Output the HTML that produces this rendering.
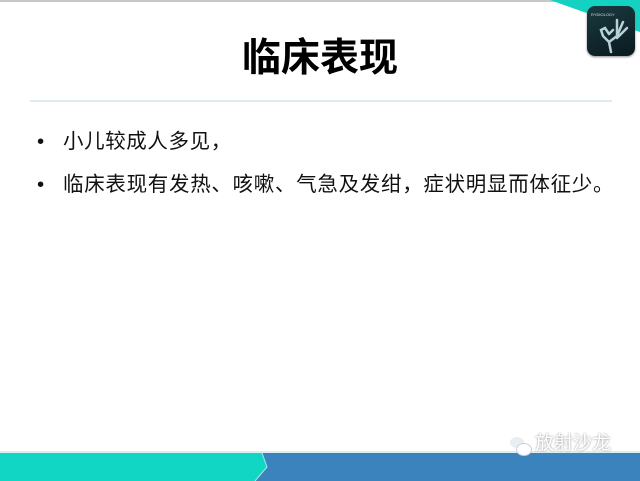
<!DOCTYPE html>
<html><head><meta charset="utf-8"><style>
body{margin:0;width:640px;height:481px;position:relative;overflow:hidden;background:#fff;font-family:"Liberation Sans","Noto Sans CJK SC",sans-serif;}
.abs{position:absolute}
</style></head><body>
<div class="abs" style="left:0;top:0;width:640px;height:2px;background:#c8c8c8"></div>
<svg class="abs" style="left:0;top:0" width="640" height="481">
<polygon points="550,0 640,0 640,32" fill="#14d2c2"/>
<rect x="0" y="451" width="640" height="2" fill="#dceff0"/>
<polygon points="0,453 262,453 267,467 255,481 0,481" fill="#12d6c4"/>
<polygon points="262,453 640,453 640,481 255,481 267,467" fill="#3b83bd"/>
<polyline points="262,453 267,467 255,481" fill="none" stroke="#a8e8e4" stroke-width="1"/>
</svg>
<div class="abs" style="left:587px;top:6px;width:48px;height:50px;border-radius:8px;background:linear-gradient(160deg,#1a3a40,#0a1a1e);box-shadow:0 1px 2px #888"></div>
<svg class="abs" style="left:587px;top:6px" width="48" height="50">
<text x="4" y="10" font-size="4" fill="#ddd" font-family="Liberation Sans">RYDIOLOGY</text>
<path d="M24 46 L22 36 L16 30 L14 24 L18 22 L22 28 M22 36 L30 30 L30 14 M30 30 L36 16 M30 32 L40 22 M22 28 L26 24" stroke="#b8d0d8" stroke-width="2.5" fill="none" stroke-linecap="round"/>
</svg>
<div class="abs" style="left:0;width:640px;top:32px;text-align:center;font-size:39px;font-weight:bold;color:#000;line-height:54px">临床表现</div>
<div class="abs" style="left:30px;top:100px;width:582px;height:2px;background:#dcecee"></div>
<div class="abs" style="left:37px;top:128px;font-size:20.5px;line-height:28px;color:#111">•</div>
<div class="abs" style="left:63px;top:128px;font-size:20.5px;line-height:28px;color:#111;white-space:nowrap;letter-spacing:0.6px">小儿较成人多见，</div>
<div class="abs" style="left:37px;top:171px;font-size:20.5px;line-height:28px;color:#111">•</div>
<div class="abs" style="left:63px;top:171px;font-size:20.5px;line-height:28px;color:#111;white-space:nowrap;letter-spacing:0.7px">临床表现有发热、咳嗽、气急及发绀，症状明显而体征少。</div>
<div class="abs" style="left:510px;top:437px;width:14px;height:11px;border-radius:50%;background:#e8eef2"></div>
<div class="abs" style="left:516px;top:443px;width:14px;height:11px;border-radius:50%;background:#fff;border:1px solid #ccd"></div>
<div class="abs" style="left:535px;top:432px;font-size:19px;color:#fff;text-shadow:0 0 2px #888;line-height:24px">放射沙龙</div>
</body></html>
